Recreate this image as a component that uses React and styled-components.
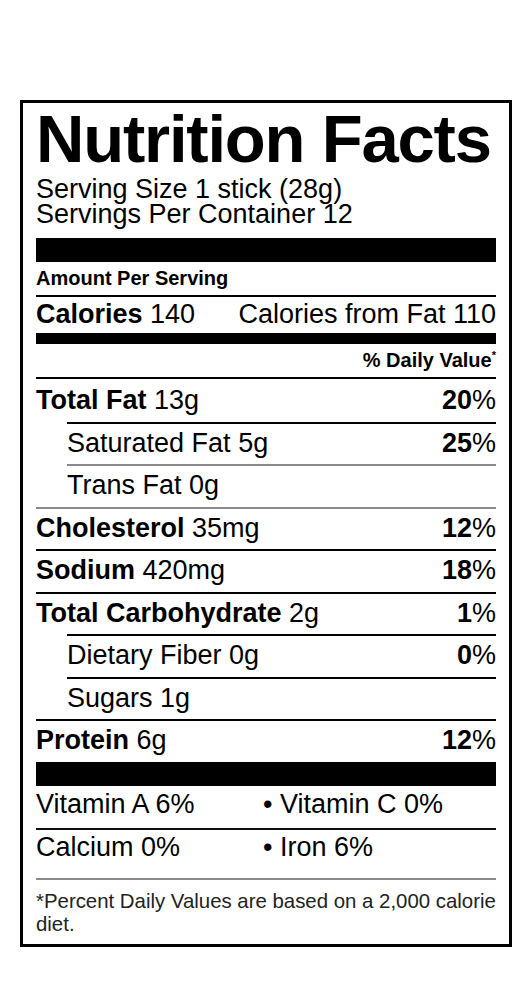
import React from "react";
import styled, { createGlobalStyle } from "styled-components";

const GlobalStyle = createGlobalStyle`
  html, body {
    margin: 0;
    padding: 0;
    background: #fff;
  }
  body {
    font-family: "Liberation Sans", Arial, sans-serif;
    color: #000;
  }
`;

const nutrients = [
  { name: "Total Fat", amount: "13g", dv: "20", bold: true },
  { name: "Saturated Fat", amount: "5g", dv: "25", sub: true },
  { name: "Trans Fat", amount: "0g", sub: true, light: true },
  { name: "Cholesterol", amount: "35mg", dv: "12", bold: true, light: true },
  { name: "Sodium", amount: "420mg", dv: "18", bold: true },
  { name: "Total Carbohydrate", amount: "2g", dv: "1", bold: true },
  { name: "Dietary Fiber", amount: "0g", dv: "0", sub: true },
  { name: "Sugars", amount: "1g", sub: true },
  { name: "Protein", amount: "6g", dv: "12", bold: true },
];

export default function App() {
  return (
    <>
      <GlobalStyle />
      <Page>
        <Label>
          <Title>Nutrition Facts</Title>
          <Serving>
            <ServingLine>Serving Size 1 stick (28g)</ServingLine>
            <ServingLine>Servings Per Container 12</ServingLine>
          </Serving>
          <Bar $h={24} $mt={11} />
          <SmallRow>Amount Per Serving</SmallRow>
          <CaloriesRow>
            <span>
              <b>Calories</b> 140
            </span>
            <span>Calories from Fat 110</span>
          </CaloriesRow>
          <Bar $h={11} />
          <SmallRow $right>
            % Daily Value<sup>*</sup>
          </SmallRow>
          <Nutrients>
            {nutrients.map((n) => (
              <NutrientRow key={n.name} $sub={n.sub} $light={n.light}>
                <span>
                  {n.bold ? <b>{n.name}</b> : n.name} {n.amount}
                </span>
                {n.dv && (
                  <span>
                    <b>{n.dv}</b>%
                  </span>
                )}
              </NutrientRow>
            ))}
          </Nutrients>
          <Bar $h={24} />
          <VitaminRow>
            <span>Vitamin A 6%</span>
            <span>• Vitamin C 0%</span>
          </VitaminRow>
          <VitaminRow $line>
            <span>Calcium 0%</span>
            <span>• Iron 6%</span>
          </VitaminRow>
          <Footnote>
            *Percent Daily Values are based on a 2,000 calorie diet.
          </Footnote>
        </Label>
      </Page>
    </>
  );
}

const Page = styled.div`
  padding: 100px 0 0 20px;
`;

const Label = styled.div`
  box-sizing: border-box;
  width: 492px;
  border: 3px solid #000;
  padding: 2px 13px 7px;
  b {
    font-weight: 700;
  }
`;

const Title = styled.h1`
  margin: 0;
  font-size: 67px;
  line-height: 67px;
  font-weight: 700;
  letter-spacing: -1.2px;
  white-space: nowrap;
`;

const Serving = styled.div`
  margin-top: 5px;
  font-size: 27px;
`;

const ServingLine = styled.div`
  height: 25px;
  line-height: 25px;
  overflow: visible;
`;

const Bar = styled.div`
  height: ${(p) => p.$h}px;
  margin-top: ${(p) => p.$mt || 0}px;
  background: #000;
`;

const SmallRow = styled.div`
  font-size: 20px;
  line-height: 24px;
  font-weight: 700;
  padding: 4px 0 5px;
  border-bottom: 2px solid #000;
  text-align: ${(p) => (p.$right ? "right" : "left")};
  sup {
    font-size: 11px;
    vertical-align: 8px;
    line-height: 0;
  }
`;

const CaloriesRow = styled.div`
  display: flex;
  justify-content: space-between;
  font-size: 27px;
  line-height: 30px;
  padding: 2px 0 4px;
`;

const Nutrients = styled.div`
  display: flex;
  flex-direction: column;
`;

const NutrientRow = styled.div`
  display: flex;
  justify-content: space-between;
  font-size: 27px;
  line-height: 30px;
  padding: 4px 0 6.5px;
  margin-left: ${(p) => (p.$sub ? "31px" : "0")};
  border-top: 2px solid ${(p) => (p.$light ? "#8a8a8a" : "#000")};
  &:first-child {
    border-top: none;
    padding-top: 6px;
  }
`;

const VitaminRow = styled.div`
  display: grid;
  grid-template-columns: 227px 1fr;
  font-size: 27px;
  line-height: 30px;
  padding: ${(p) => (p.$line ? "2px 0 16px" : "3px 0 9px")};
  border-top: ${(p) => (p.$line ? "2px solid #111" : "none")};
`;

const Footnote = styled.div`
  border-top: 2px solid #8a8a8a;
  padding-top: 10px;
  font-size: 20.4px;
  line-height: 23.5px;
  color: #222;
`;
